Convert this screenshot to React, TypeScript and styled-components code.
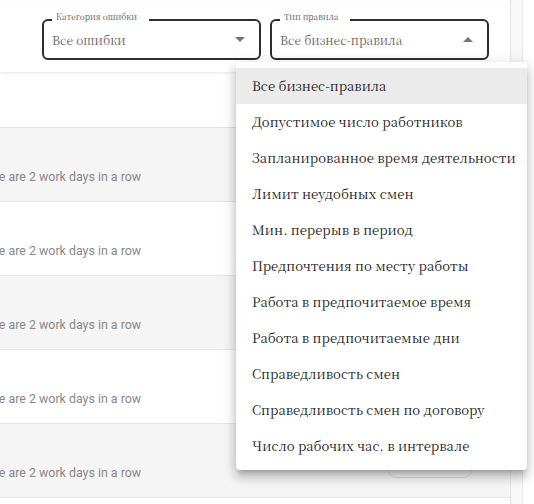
import styled, { createGlobalStyle } from "styled-components";

const serif = `"Noto Serif CJK SC", "Liberation Serif", serif`;

const GlobalStyle = createGlobalStyle`
  html, body {
    margin: 0;
    padding: 0;
    background: #ffffff;
  }
  * {
    box-sizing: border-box;
  }
`;

const Page = styled.div`
  position: relative;
  display: flex;
  width: 534px;
  height: 504px;
  overflow: hidden;
  background: #ffffff;
`;

const MainColumn = styled.div`
  display: flex;
  flex-direction: column;
  width: 511px;
  flex-shrink: 0;
  overflow: hidden;
  border-right: 1px solid #e4e4e4;
`;

const SideStrip = styled.div`
  width: 12px;
  flex-shrink: 0;
  background: #f8f8f8;
  border-right: 1px solid #ebebeb;
`;

const FilterCard = styled.div`
  display: flex;
  flex-shrink: 0;
  justify-content: flex-end;
  gap: 9px;
  height: 67px;
  margin-top: 5px;
  padding: 14px 21px 0 0;
  background: #ffffff;
  border-radius: 0 8px 0 0;
  box-shadow: 0 1px 3px rgba(0, 0, 0, 0.1), 0 0 1px rgba(0, 0, 0, 0.06);
`;

const Field = styled.div`
  position: relative;
  display: flex;
  align-items: center;
  justify-content: space-between;
  width: 219px;
  height: 41px;
  padding: 0 14px 0 8px;
  border: 2px solid #2e2e2e;
  border-radius: 6px;
`;

const FieldLabel = styled.span`
  position: absolute;
  top: -10px;
  left: 8px;
  padding: 0 12px 0 4px;
  background: #ffffff;
  font-family: ${serif};
  font-size: 8.3px;
  line-height: 10px;
  color: #555555;
`;

const FieldValue = styled.span`
  font-family: ${serif};
  font-size: 12px;
  color: #666666;
`;

const HeaderRow = styled.div`
  flex-shrink: 0;
  height: 56px;
  border-bottom: 1px solid #e2e2e2;
`;

const Row = styled.div<{ $shaded: boolean }>`
  display: flex;
  align-items: center;
  justify-content: space-between;
  height: 74px;
  flex-shrink: 0;
  padding-right: 38px;
  overflow: hidden;
  background: ${(p) => (p.$shaded ? "#f5f5f5" : "#ffffff")};
  border-bottom: 1px solid #e6e6e6;
`;

const RowText = styled.span`
  align-self: flex-start;
  margin-top: 41px;
  margin-left: -26px;
  white-space: nowrap;
  font-family: Roboto, "Liberation Sans", sans-serif;
  font-size: 12.4px;
  line-height: 16px;
  color: #888888;
`;

const RowButton = styled.button`
  width: 84px;
  height: 34px;
  background: transparent;
  border: 1px solid #dcdcdc;
  border-radius: 8px;
`;

const Menu = styled.ul`
  position: absolute;
  top: 62px;
  left: 236px;
  width: 291px;
  margin: 0;
  padding: 6px 0;
  list-style: none;
  background: #ffffff;
  border-radius: 4px;
  box-shadow: 0 5px 5px -3px rgba(0, 0, 0, 0.2), 0 8px 10px 1px rgba(0, 0, 0, 0.14),
    0 3px 14px 2px rgba(0, 0, 0, 0.12);
`;

const MenuItem = styled.li<{ $active?: boolean }>`
  display: flex;
  align-items: center;
  height: 36px;
  padding: 0 16px 1px;
  font-family: ${serif};
  font-size: 13.2px;
  color: #222222;
  white-space: nowrap;
  background: ${(p) => (p.$active ? "#ebebeb" : "transparent")};
`;

function Arrow({ up }: { up?: boolean }) {
  return (
    <svg width="10" height="5" viewBox="0 0 10 5">
      <path d={up ? "M0 5l5-5 5 5z" : "M0 0l5 5 5-5z"} fill="#757575" />
    </svg>
  );
}

const ruleTypes = [
  "Все бизнес-правила",
  "Допустимое число работников",
  "Запланированное время деятельности",
  "Лимит неудобных смен",
  "Мин. перерыв в период",
  "Предпочтения по месту работы",
  "Работа в предпочитаемое время",
  "Работа в предпочитаемые дни",
  "Справедливость смен",
  "Справедливость смен по договору",
  "Число рабочих час. в интервале",
];

const rows = [0, 1, 2, 3, 4, 5];

export default function App() {
  return (
    <>
      <GlobalStyle />
      <Page>
        <MainColumn>
          <FilterCard>
            <Field>
              <FieldLabel>Категория ошибки</FieldLabel>
              <FieldValue>Все ошибки</FieldValue>
              <Arrow />
            </Field>
            <Field>
              <FieldLabel>Тип правила</FieldLabel>
              <FieldValue>Все бизнес-правила</FieldValue>
              <Arrow up />
            </Field>
          </FilterCard>
          <HeaderRow />
          {rows.map((i) => (
            <Row key={i} $shaded={i % 2 === 0}>
              <RowText>There are 2 work days in a row</RowText>
              <RowButton aria-label="open" />
            </Row>
          ))}
        </MainColumn>
        <SideStrip />
        <Menu>
          {ruleTypes.map((t, i) => (
            <MenuItem key={t} $active={i === 0}>
              {t}
            </MenuItem>
          ))}
        </Menu>
      </Page>
    </>
  );
}
